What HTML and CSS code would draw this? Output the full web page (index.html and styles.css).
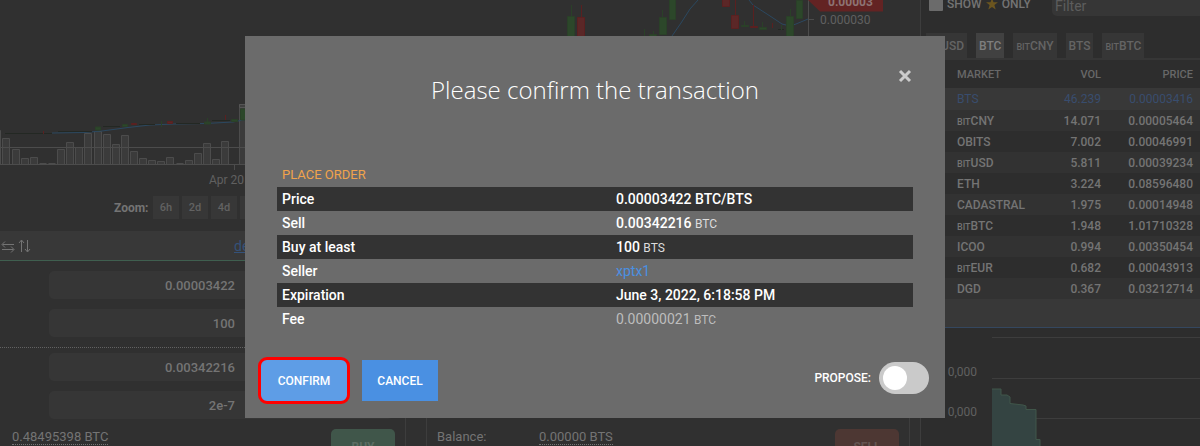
FILE: index.html
```html
<!DOCTYPE html>
<html lang="en">
<head>
<meta charset="utf-8">
<title>Confirm transaction</title>
<link rel="stylesheet" href="styles.css">
</head>
<body>
<div class="app">
  <main class="exchange">
    <svg class="chart" viewBox="0 0 920 190" role="img" aria-label="Price chart">
      <g class="volume">
        <path d="M-8 164V130.500H.5V164M2.500 164V138.500H9.500V164M12.500 164V149.500H19.500V164M21.500 164V158.500H28.500V164M30.500 164V157.500H37.500V164M39.500 163.500H46.500M48.500 163.500H55.500M57.500 164V149.500H64.500V164M66.500 164V142.500H73.500V164M75.500 164V147.500H82.500V164M84.500 164V133.500H91.500V164M94.500 164V131.500H101.500V164M103.500 164V134.500H110.500V164M112.500 164V144.500H119.500V164M121.500 164V135.500H128.500V164M130.500 164V151.500H137.500V164M139.500 164V158.500H146.500V164M148.500 164V160.500H155.500V164M157.500 164V161.500H164.500V164M166.500 164V157.500H173.500V164M176.500 163.500H183.500M185.500 164V160.500H192.500V164M194.500 164V153.500H201.500V164M203.500 164V143.500H210.500V164M212.500 164V159.500H219.500V164M221.500 164V141.500H228.500V164M239.500 164V104.500H248V164"/>
      </g>
      <path class="axis" d="M0 147.500H920M0 164.500H920M234.500 164V170M808.500 0V60M808.500 19.500H814"/>
      <path class="avg" d="M52 133L84 132.500L102 131L128 127.500L150 125L175 124L205 123.500L233 122L248 119M672 36L681 23L690 9L698 0M749 0L753 5L770 16L782 24L790 26L796 24L808 19"/>
      <path class="flat" d="M5 133.500H52M58 131.500H92M103 126.500H120M139 124.500H155M176 123.500H200M212 120.500H230M778 29.500H784"/>
      <g class="up">
        <path d="M571.500 5V16M644.500 29V36M653.500 31V36M662.500 10V18M744.500 21V26M762.500 22V28M781.500 25V30M790.500 9V17M207.500 118V122M161.500 121V127"/>
        <path d="M567.500 16.500h7v24h-7zM649.500 34.500h7v4h-7zM659.500 17.500h7v17h-7zM669.500-2h6v21.500h-6zM741.500 25.500h7v1h-7zM759.500 27.500h7v2h-7zM786.500 16.500h7v25h-7zM796.500.5h6v18h-6zM95.500 127h5v3h-5zM122.500 124.500h5v2h-5zM204.500 122h6v2h-6zM231.500 119.500h6v2h-6zM240.500 109h8v11h-8z"/>
      </g>
      <g class="down">
        <path d="M581.500 5V18M735.500 0V16M753.500 5V27M772.500 23V28M225.500 115V120M43.500 131V134"/>
        <path d="M577.500 17.500h7v24h-7zM722.500-2h7v8.500h-7zM731.500 15.500h7v13h-7zM750.500 26.500h7v1h-7zM131.500 123.500h5v1h-5zM167.500 121.500h5v2h-5z"/>
      </g>
      <path class="flag" d="M808 0L820 11.500H883V0Z"/>
      <path class="scrollbar" d="M239.500 104.500H246V107.500H239.500Z"/>
      <text class="flag-text" x="828" y="6">0.00003</text>
      <text class="tick" x="820" y="24">0.000030</text>
      <text class="tick" x="209" y="184">Apr 20</text>
    </svg>
    <div class="zoom">
      <span class="zoom-label">Zoom:</span>
      <button class="zoom-btn">6h</button>
      <button class="zoom-btn">2d</button>
      <button class="zoom-btn">4d</button>
      <button class="zoom-btn" aria-label="More"></button>
    </div>
    <div class="orders">
      <section class="panel">
        <header class="panel-head">
          <svg class="swap" viewBox="0 0 32 16" aria-hidden="true"><path d="M14 6.500H2.500M5 3.500L2 6.500L5 9.500M2 11.500H13.500M11 8.500L14 11.500L11 14.500M21.500 14V2.500M19 5L21.500 2L24 5M27.500 2V13.500M25 11L27.500 14L30 11"/></svg>
          <a class="head-link" href="#">de</a>
        </header>
        <div class="fields">
          <input class="field" aria-label="Price" value="0.00003422">
          <input class="field" aria-label="Amount" value="100">
        </div>
        <div class="fields fields-total">
          <input class="field" aria-label="Total" value="0.00342216">
          <input class="field" aria-label="Fee" value="2e-7">
        </div>
        <div class="balance">
          <a class="amount" href="#">0.48495398 BTC</a>
          <button class="trade trade-buy">BUY</button>
        </div>
      </section>
      <section class="panel panel-sell">
        <div class="balance">
          <span class="balance-label">Balance:</span>
          <a class="amount" href="#">0.00000 BTS</a>
          <button class="trade trade-sell">SELL</button>
        </div>
      </section>
    </div>
  </main>
  <aside class="sidebar">
    <div class="filter-row">
      <label class="starred"><input class="check" type="checkbox">SHOW
        <svg class="star" viewBox="0 0 12 12" aria-hidden="true"><path d="M6 0L7.500 4.200H12L8.400 7L9.700 11.500L6 8.900L2.300 11.500L3.600 7L0 4.200H4.500Z"/></svg>
        ONLY</label>
      <input class="filter" aria-label="Filter" placeholder="Filter">
    </div>
    <nav class="tabs">
      <button class="tab tab-first">USD</button>
      <button class="tab tab-active">BTC</button>
      <button class="tab"><small>BIT</small>CNY</button>
      <button class="tab">BTS</button>
      <button class="tab"><small>BIT</small>BTC</button>
    </nav>
    <table class="markets">
      <thead><tr><th>MARKET</th><th>VOL</th><th>PRICE</th></tr></thead>
      <tbody>
        <tr class="current"><td>BTS</td><td>46.239</td><td>0.00003416</td></tr>
        <tr><td><small>BIT</small>CNY</td><td>14.071</td><td>0.00005464</td></tr>
        <tr><td>OBITS</td><td>7.002</td><td>0.00046991</td></tr>
        <tr><td><small>BIT</small>USD</td><td>5.811</td><td>0.00039234</td></tr>
        <tr><td>ETH</td><td>3.224</td><td>0.08596480</td></tr>
        <tr><td>CADASTRAL</td><td>1.975</td><td>0.00014948</td></tr>
        <tr><td><small>BIT</small>BTC</td><td>1.948</td><td>1.01710328</td></tr>
        <tr><td>ICOO</td><td>0.994</td><td>0.00350454</td></tr>
        <tr><td><small>BIT</small>EUR</td><td>0.682</td><td>0.00043913</td></tr>
        <tr><td>DGD</td><td>0.367</td><td>0.03212714</td></tr>
      </tbody>
    </table>
    <div class="depth-head"></div>
    <svg class="depth" viewBox="0 0 279 118" role="img" aria-label="Market depth">
      <path class="depth-grid" d="M71 9.500H279M71 50.500H279M71 90.500H279"/>
      <path class="depth-area" d="M71 61H80V67H86L89 69V75.500L102 77L105 78V81.500H115V111.500H119V118H71Z"/>
      <path class="depth-line" d="M71 61H80V67H86L89 69V75.500L102 77L105 78V81.500H115V111.500H119V118"/>
      <text class="tick" x="56" y="48" text-anchor="end">0,000</text>
      <text class="tick" x="56" y="88" text-anchor="end">0,000</text>
    </svg>
  </aside>
</div>

<div class="overlay">
  <div class="modal" role="dialog" aria-modal="true" aria-labelledby="modal-title">
    <button class="close" aria-label="Close"><svg viewBox="0 0 14 14"><path d="M2 2L12 12M12 2L2 12"/></svg></button>
    <h1 class="title" id="modal-title">Please confirm the transaction</h1>
    <table class="details">
      <caption>PLACE ORDER</caption>
      <tbody>
        <tr><th scope="row">Price</th><td>0.00003422 BTC/BTS</td></tr>
        <tr><th scope="row">Sell</th><td>0.00342216 <span class="unit">BTC</span></td></tr>
        <tr><th scope="row">Buy at least</th><td>100 <span class="unit">BTS</span></td></tr>
        <tr><th scope="row">Seller</th><td><a class="account" href="#">xptx1</a></td></tr>
        <tr><th scope="row">Expiration</th><td>June 3, 2022, 6:18:58 PM</td></tr>
        <tr><th scope="row">Fee</th><td class="muted">0.00000021 <span class="unit">BTC</span></td></tr>
      </tbody>
    </table>
    <div class="actions">
      <button class="btn btn-confirm">CONFIRM</button>
      <button class="btn">CANCEL</button>
      <label class="propose">PROPOSE: <input class="switch" type="checkbox" role="switch"></label>
    </div>
  </div>
</div>
</body>
</html>
```
FILE: styles.css
```css
* { box-sizing: border-box; }
body {
  margin: 0;
  height: 100vh;
  overflow: hidden;
  background: #303030;
  color: #747474;
  font: 13px/20px Roboto, sans-serif;
}
button, input { font: inherit; color: inherit; border: 0; margin: 0; padding: 0; }
small { font-size: 9px; line-height: 1; }

.app { display: grid; grid-template-columns: minmax(0, 1fr) 280px; height: 100vh; overflow: hidden; }

/* Chart */
.chart { display: block; width: 100%; }
.volume path { fill: #3b3b3b; stroke: #4c4c4c; }
.axis { fill: none; stroke: #4c4c4c; }
.avg { fill: none; stroke: #2b4860; }
.flat { fill: none; stroke: #232823; }
.up path { fill: #2c472a; stroke: #2a4028; }
.down path { fill: #5b2727; stroke: #5a2020; }
.flag { fill: #632323; }
.flag-text { fill: #8d7373; font-size: 12px; font-weight: 700; }
.scrollbar { fill: #404040; stroke: #555; }
.tick { fill: #606060; font-size: 12px; }

.zoom { display: flex; align-items: center; gap: 3px; padding: 6px 0 12px 114px; }
.zoom-label { width: 36px; font-size: 12px; font-weight: 700; }
.zoom-btn { width: 26px; height: 23px; background: #373737; color: #626262; font-size: 11px; font-weight: 500; }

/* Order forms */
.orders { display: grid; grid-template-columns: 406fr 484fr; gap: 20px; padding-right: 10px; }
.panel { border-right: 1px solid #3d3d3d; }
.panel-sell { display: flex; flex-direction: column; justify-content: flex-end; border-left: 1px solid #3d3d3d; }
.panel-head {
  display: flex;
  gap: 202px;
  height: 30px;
  align-items: center;
  background: #383838;
  border-bottom: 1px solid #3f5f4f;
}
.swap { width: 32px; height: 16px; fill: none; stroke: #747474; }
.head-link { color: #34527a; font-size: 14px; }
.fields { display: grid; gap: 10px; padding: 10px 12px 10px 49px; }
.fields-total { padding-top: 5px; border-top: 1px dotted #626262; }
.field {
  width: 100%;
  height: 28px;
  padding-right: 158px;
  border-radius: 5px;
  background: #363636;
  text-align: right;
  font-weight: 500;
}
.balance { display: flex; align-items: flex-start; padding: 0 10px; height: 56px; }
.fields-total + .balance { padding-left: 12px; }
.amount, .balance-label { line-height: 15px; }
.amount { color: inherit; text-decoration: none; border-bottom: 1px dotted #747474; }
.balance-label { width: 102px; }
.trade { width: 64px; height: 36px; margin-left: auto; border-radius: 5px; font-weight: 700; font-size: 12px; }
.trade-buy { background: #40564a; color: #5c6d63; }
.trade-sell { background: #4d3733; color: #645451; }

/* Markets */
.sidebar { background: #2d2d2d; border-left: 1px solid #3d3d3d; }
.filter-row { display: flex; justify-content: space-between; height: 33px; }
.starred { display: flex; gap: 4px; height: 8px; align-items: center; padding-left: 8px; font-size: 12px; font-weight: 500; white-space: nowrap; }
.check { appearance: none; width: 14px; height: 14px; background: #6b6b6b; border-radius: 1px; }
.star { width: 12px; height: 12px; fill: #6b551f; }
.filter { width: 148px; height: 16px; padding: 0 0 4px 3px; background: #363636; border-radius: 0 0 0 5px; font-size: 14px; }
.filter::placeholder { color: #5d5d5d; opacity: 1; }
.tabs { display: flex; gap: 9px; padding-left: 5px; border-bottom: 2px solid #363636; }
.tab { height: 25px; padding: 0 3px; background: #363636; color: #646464; font-size: 12px; font-weight: 500; white-space: nowrap; }
.tab-first { width: 41px; text-align: right; }
.tab-active { background: #414141; color: #7e7e7e; }
.markets { width: 100%; border-collapse: collapse; font-size: 12px; font-weight: 500; }
.markets th { height: 28px; padding: 2px 7px 0 0; font-size: 11px; font-weight: 500; color: #686868; text-align: right; }
.markets td { height: 21px; padding: 0 7px 0 0; text-align: right; line-height: 20px; }
.markets th:first-child, .markets td:first-child { width: 120px; padding-left: 36px; text-align: left; }
.markets th:last-child { width: 92px; }
.markets tbody tr:nth-child(even) { background: #323232; }
.markets tbody .current { background: #383838; color: #384d6e; font-weight: 400; }
.markets .current td { height: 22px; }
.depth-head { height: 29px; background: #383838; border-bottom: 1px solid #34475f; }
.depth { display: block; width: 100%; }
.depth-grid { stroke: #3d3d3d; }
.depth-area { fill: #344442; }
.depth-line { fill: none; stroke: #40564a; }

/* Dialog */
.overlay { position: fixed; inset: 0; display: flex; justify-content: center; align-items: flex-start; padding: 36px 10px 0 0; }
.modal { position: relative; width: 700px; max-width: 100%; padding: 36px 16px 14px; background: #6b6b6b; color: #fff; }
.close { position: absolute; top: 33px; right: 33px; width: 14px; height: 14px; background: none; line-height: 0; }
.close svg { width: 14px; height: 14px; fill: none; stroke: #ccc; stroke-width: 3; }
.title { margin: 0 0 55px; font: 300 24px/36px "Open Sans", sans-serif; text-align: center; }
.details { width: calc(100% - 32px); margin: 0 16px 26px; border-collapse: collapse; font-size: 14px; }
.details caption { height: 24px; padding-left: 5px; line-height: 24px; font-size: 13px; color: #f0a34c; text-align: left; }
.details th, .details td { height: 24px; padding: 0 5px; line-height: 24px; font-weight: 500; text-align: left; }
.details th { width: 334px; }
.details tr:nth-child(odd) { background: #333; }
.unit { font-size: 12px; line-height: 1; font-weight: 400; color: #ddd; }
.account { color: #4a90e2; font-weight: 400; text-decoration: none; }
.details .muted, .muted .unit { color: #bdbdbd; font-weight: 400; }
.actions { display: flex; align-items: center; gap: 12px; margin-left: -3px; }
.btn { width: 76px; height: 41px; background: #4a90e2; font-size: 12px; font-weight: 500; }
.btn-confirm { width: 92px; height: 47px; background: #5e9de6; border: 3px solid #f00; border-radius: 9px; }
.propose { display: flex; align-items: center; gap: 8px; height: 41px; margin-left: auto; align-self: flex-start; font-size: 12px; font-weight: 500; }
.switch { appearance: none; width: 50px; height: 32px; padding: 4px; background: #cacaca; border-radius: 16px; }
.switch::before { content: ""; display: block; width: 24px; height: 24px; background: #fff; border-radius: 50%; }
.switch:checked::before { margin-left: auto; }
```
